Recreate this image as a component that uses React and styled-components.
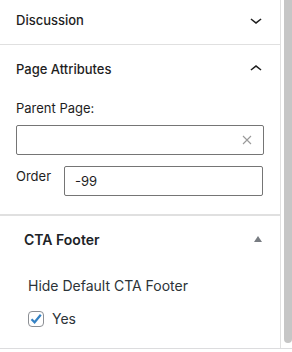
import React from 'react'
import styled, { createGlobalStyle } from 'styled-components'

const Global = createGlobalStyle`
  body {
    margin: 0;
    background: #fff;
    font-family: Inter, "Liberation Sans", sans-serif;
    color: #1e1e1e;
  }
`

const Page = styled.div`
  display: flex;
  height: 348px;
  border-bottom: 1px solid #dcdcde;
`

const Sidebar = styled.div`
  width: 281px;
  box-sizing: border-box;
  border-right: 1px solid #e0e0e0;
  display: flex;
  flex-direction: column;
`

const Gutter = styled.div`
  width: 11px;
  padding-left: 3px;
  box-sizing: border-box;
`

const Thumb = styled.div`
  width: 8px;
  height: 343px;
  background: #c6c6c6;
  border-radius: 0 0 4px 4px;
`

const PanelHeader = styled.div`
  height: ${p => p.$h}px;
  box-sizing: border-box;
  padding: 0 16px ${p => p.$pb || 0}px;
  display: flex;
  align-items: center;
  justify-content: space-between;
  font-size: 13px;
  font-weight: 500;
  border-bottom: ${p => (p.$border ? '1px solid #e0e0e0' : 'none')};
`

const Chevron = styled.svg`
  width: 24px;
  height: 24px;
  margin-right: -4px;
  fill: #1e1e1e;
`

const PanelBody = styled.div`
  padding: 6px 16px 18px;
  border-bottom: 1px solid #e0e0e0;
`

const Label = styled.div`
  font-size: 13px;
  line-height: 18px;
`

const Combo = styled.div`
  margin-top: 8px;
  height: 30px;
  box-sizing: border-box;
  border: 1px solid #757575;
  border-radius: 2px;
  display: flex;
  align-items: center;
  justify-content: flex-end;
  padding-right: 11px;
`

const OrderRow = styled.div`
  margin-top: 11px;
  display: flex;
  align-items: flex-start;
`

const OrderLabel = styled(Label)`
  width: 48px;
  padding-top: 1px;
`

const NumberBox = styled.div`
  width: 199px;
  height: 30px;
  box-sizing: border-box;
  border: 1px solid #757575;
  border-radius: 2px;
  padding-left: 10px;
  display: flex;
  align-items: center;
  font-size: 13px;
`

const Postbox = styled.div`
  border-top: 1px solid #e0e0e0;
  flex: 1;
`

const PostboxHeader = styled.div`
  height: 46px;
  padding: 0 18px 0 24px;
  display: flex;
  align-items: center;
  justify-content: space-between;
  font-size: 14px;
  font-weight: 600;
  color: #1d2327;
`

const Triangle = styled.span`
  width: 0;
  height: 0;
  border-left: 4px solid transparent;
  border-right: 4px solid transparent;
  border-bottom: 6px solid #787c82;
`

const PostboxBody = styled.div`
  padding: 15px 28px 0;
  font-size: 14px;
  color: #2c3338;
`

const CheckRow = styled.label`
  margin-top: 17px;
  display: flex;
  align-items: center;
  gap: 8px;
  line-height: 16px;
`

const Box = styled.span`
  width: 16px;
  height: 16px;
  box-sizing: border-box;
  border: 1px solid #8c8f94;
  border-radius: 4px;
  display: flex;
  align-items: center;
  justify-content: center;
`

const App = () => (
  <>
    <Global />
    <Page>
      <Sidebar>
        <PanelHeader $h={45} $pb={5} $border>
          Discussion
          <Chevron viewBox="0 0 24 24">
            <path d="M17.5 11.6L12 16l-5.5-4.4.9-1.2L12 14l4.6-3.6 1 1.2z" />
          </Chevron>
        </PanelHeader>
        <PanelHeader $h={48}>
          Page Attributes
          <Chevron viewBox="0 0 24 24">
            <path d="M6.5 12.4L12 8l5.5 4.4-.9 1.2L12 10l-4.6 3.6-1-1.2z" />
          </Chevron>
        </PanelHeader>
        <PanelBody>
          <Label>Parent Page:</Label>
          <Combo>
            <svg width="10" height="10" viewBox="0 0 10 10">
              <path d="M1 1L9 9M9 1L1 9" stroke="#9a9a9a" strokeWidth="1.1" />
            </svg>
          </Combo>
          <OrderRow>
            <OrderLabel>Order</OrderLabel>
            <NumberBox>-99</NumberBox>
          </OrderRow>
        </PanelBody>
        <Postbox>
          <PostboxHeader>
            CTA Footer
            <Triangle />
          </PostboxHeader>
          <PostboxBody>
            Hide Default CTA Footer
            <CheckRow>
              <Box>
                <svg width="14" height="14" viewBox="0 0 14 14">
                  <path d="M2.5 7.2L5.6 10.3L11.8 2.8" fill="none" stroke="#3582c4" strokeWidth="2.2" />
                </svg>
              </Box>
              Yes
            </CheckRow>
          </PostboxBody>
        </Postbox>
      </Sidebar>
      <Gutter>
        <Thumb />
      </Gutter>
    </Page>
  </>
)

export default App
